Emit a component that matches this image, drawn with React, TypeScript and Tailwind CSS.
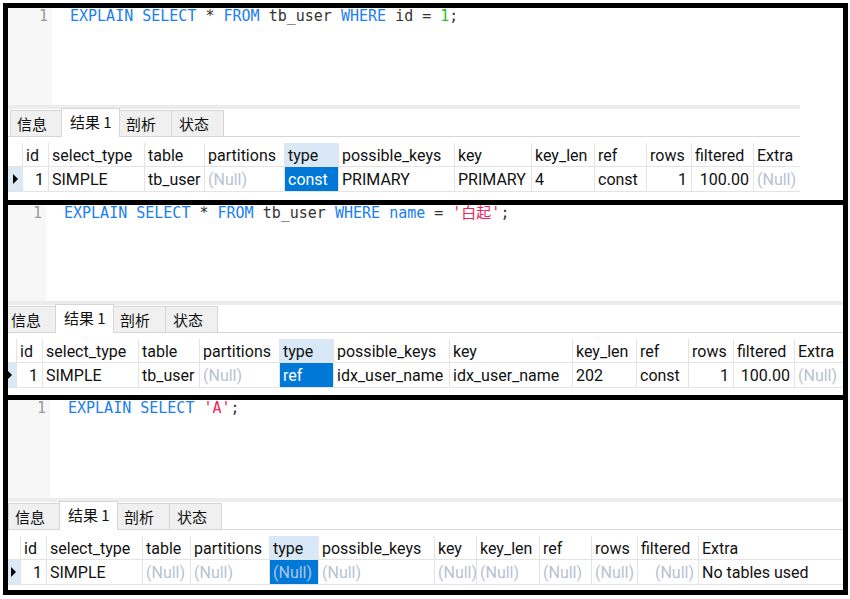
import React from "react";

type Cell = { text: string; right?: boolean; nul?: boolean; sel?: boolean };

const COLS = ["id", "select_type", "table", "partitions", "type", "possible_keys", "key", "key_len", "ref", "rows", "filtered", "Extra"];

const MONO = "font-['DejaVu_Sans_Mono','Noto_Sans_CJK_SC',monospace] text-[15px] leading-[16px] whitespace-pre";

function Kw({ children }: { children: React.ReactNode }) {
  return <span className="text-[#1a7ef0]">{children}</span>;
}
function Id({ children }: { children: React.ReactNode }) {
  return <span className="text-[#333333]">{children}</span>;
}

function Tabs() {
  const tab = "flex h-[26px] items-center border border-b-0 border-[#d6d6d6] bg-[#f0f0f0] pl-[6px] pt-[2px]";
  return (
    <div className="flex h-[28px] items-end border-b border-[#d6d6d6] pl-[2px] font-['Noto_Sans_CJK_SC',sans-serif] text-[15px] text-[#111]">
      <div className={`${tab} w-[52px]`}>信息</div>
      <div className="relative z-10 -mb-px -ml-px flex h-[29px] w-[59px] items-center border border-b-0 border-[#d6d6d6] bg-white pl-[8px] pb-[2px]">
        结果 1
      </div>
      <div className={`${tab} -ml-px w-[53px] pl-[5px]`}>剖析</div>
      <div className={`${tab} -ml-px w-[53px] pl-[7px]`}>状态</div>
    </div>
  );
}

function Table({ widths, row }: { widths: string[]; row: Cell[] }) {
  return (
    <div className="font-['Roboto',sans-serif] text-[16px] text-[#111]">
      <div className="flex h-[24px] border-b border-[#e4e4e4] leading-[23px]">
        <div className="w-[14px] shrink-0" />
        {COLS.map((c, i) => (
          <div
            key={c}
            className={`${widths[i]} shrink-0 whitespace-nowrap border-l border-[#e4e4e4] pl-[3px] pt-[1px] ${c === "type" ? "bg-[#d9e8f6]" : "bg-white"}`}
          >
            {c}
          </div>
        ))}
      </div>
      <div className="flex h-[25px] border-b border-[#e4e4e4] leading-[22px]">
        <div className="flex w-[14px] shrink-0 items-center bg-[#dbe8f5] pl-[5px]">
          <div className="h-0 w-0 border-y-[5px] border-l-[5px] border-y-transparent border-l-black" />
        </div>
        {row.map((cell, i) => (
          <div
            key={i}
            className={`${widths[i]} shrink-0 whitespace-nowrap border-l border-[#e4e4e4] pt-[2px] ${cell.right ? "pr-[4px] text-right" : "pl-[3px]"} ${cell.sel ? "bg-[#0078d7]" : "bg-white"} ${cell.sel ? (cell.nul ? "text-[#aec6e6]" : "text-white") : cell.nul ? "text-[#b8c2d2]" : ""}`}
          >
            {cell.text}
          </div>
        ))}
      </div>
    </div>
  );
}

function Panel({
  h,
  shift,
  editorH,
  lowerW,
  code,
  widths,
  row,
}: {
  h: string;
  shift: string;
  editorH: string;
  lowerW: string;
  code: React.ReactNode;
  widths: string[];
  row: Cell[];
}) {
  return (
    <div className={`${h} overflow-hidden bg-white`}>
      <div className={shift}>
        <div className={`${editorH} flex`}>
          <div className={`w-[44px] shrink-0 bg-[#f7f7f7] pr-[4px] text-right text-[#9a9a9a] ${MONO}`}>1</div>
          <div className={`pl-[18px] text-[#333333] ${MONO}`}>{code}</div>
        </div>
        <div className={lowerW}>
          <div className="h-[4px] bg-[#ececec]" />
          <Tabs />
          <div className="h-[6px]" />
          <Table widths={widths} row={row} />
        </div>
      </div>
    </div>
  );
}

const N: Cell = { text: "(Null)", nul: true };

export default function App() {
  return (
    <div className="min-h-screen bg-white pl-[3px] pt-[3px]">
      <div className="flex w-[845px] flex-col border-[5px] border-black">
        <Panel
          h="h-[192px]"
          shift="ml-0"
          editorH="h-[97px]"
          lowerW="w-[792px]"
          code={
            <>
              <Kw>EXPLAIN</Kw> <Kw>SELECT</Kw> * <Kw>FROM</Kw> <Id>tb_user</Id> <Kw>WHERE</Kw> <Id>id</Id> = <span className="text-[#20c426]">1</span>;
            </>
          }
          widths={["w-[26px]", "w-[96px]", "w-[60px]", "w-[80px]", "w-[54px]", "w-[116px]", "w-[77px]", "w-[63px]", "w-[52px]", "w-[45px]", "w-[62px]", "w-[47px]"]}
          row={[
            { text: "1", right: true },
            { text: "SIMPLE" },
            { text: "tb_user" },
            N,
            { text: "const", sel: true },
            { text: "PRIMARY" },
            { text: "PRIMARY" },
            { text: "4" },
            { text: "const" },
            { text: "1", right: true },
            { text: "100.00", right: true },
            N,
          ]}
        />
        <div className="h-[5px] bg-black" />
        <Panel
          h="h-[190px]"
          shift="ml-[-6px]"
          editorH="h-[96px]"
          lowerW="w-auto"
          code={
            <>
              <Kw>EXPLAIN</Kw> <Kw>SELECT</Kw> * <Kw>FROM</Kw> <Id>tb_user</Id> <Kw>WHERE</Kw> <Kw>name</Kw> = <span className="text-[#f0245a]">'白起'</span>;
            </>
          }
          widths={["w-[26px]", "w-[96px]", "w-[61px]", "w-[80px]", "w-[54px]", "w-[116px]", "w-[123px]", "w-[64px]", "w-[52px]", "w-[45px]", "w-[61px]", "w-[80px]"]}
          row={[
            { text: "1", right: true },
            { text: "SIMPLE" },
            { text: "tb_user" },
            N,
            { text: "ref", sel: true },
            { text: "idx_user_name" },
            { text: "idx_user_name" },
            { text: "202" },
            { text: "const" },
            { text: "1", right: true },
            { text: "100.00", right: true },
            N,
          ]}
        />
        <div className="h-[5px] bg-black" />
        <Panel
          h="h-[190px]"
          shift="ml-[-2px]"
          editorH="h-[98px]"
          lowerW="w-auto"
          code={
            <>
              <Kw>EXPLAIN</Kw> <Kw>SELECT</Kw> <span className="text-[#f0245a]">'A'</span>;
            </>
          }
          widths={["w-[26px]", "w-[96px]", "w-[48px]", "w-[79px]", "w-[49px]", "w-[116px]", "w-[42px]", "w-[63px]", "w-[52px]", "w-[46px]", "w-[61px]", "w-[144px]"]}
          row={[
            { text: "1", right: true },
            { text: "SIMPLE" },
            N,
            N,
            { text: "(Null)", nul: true, sel: true },
            N,
            N,
            N,
            N,
            N,
            { text: "(Null)", nul: true, right: true },
            { text: "No tables used" },
          ]}
        />
      </div>
    </div>
  );
}
